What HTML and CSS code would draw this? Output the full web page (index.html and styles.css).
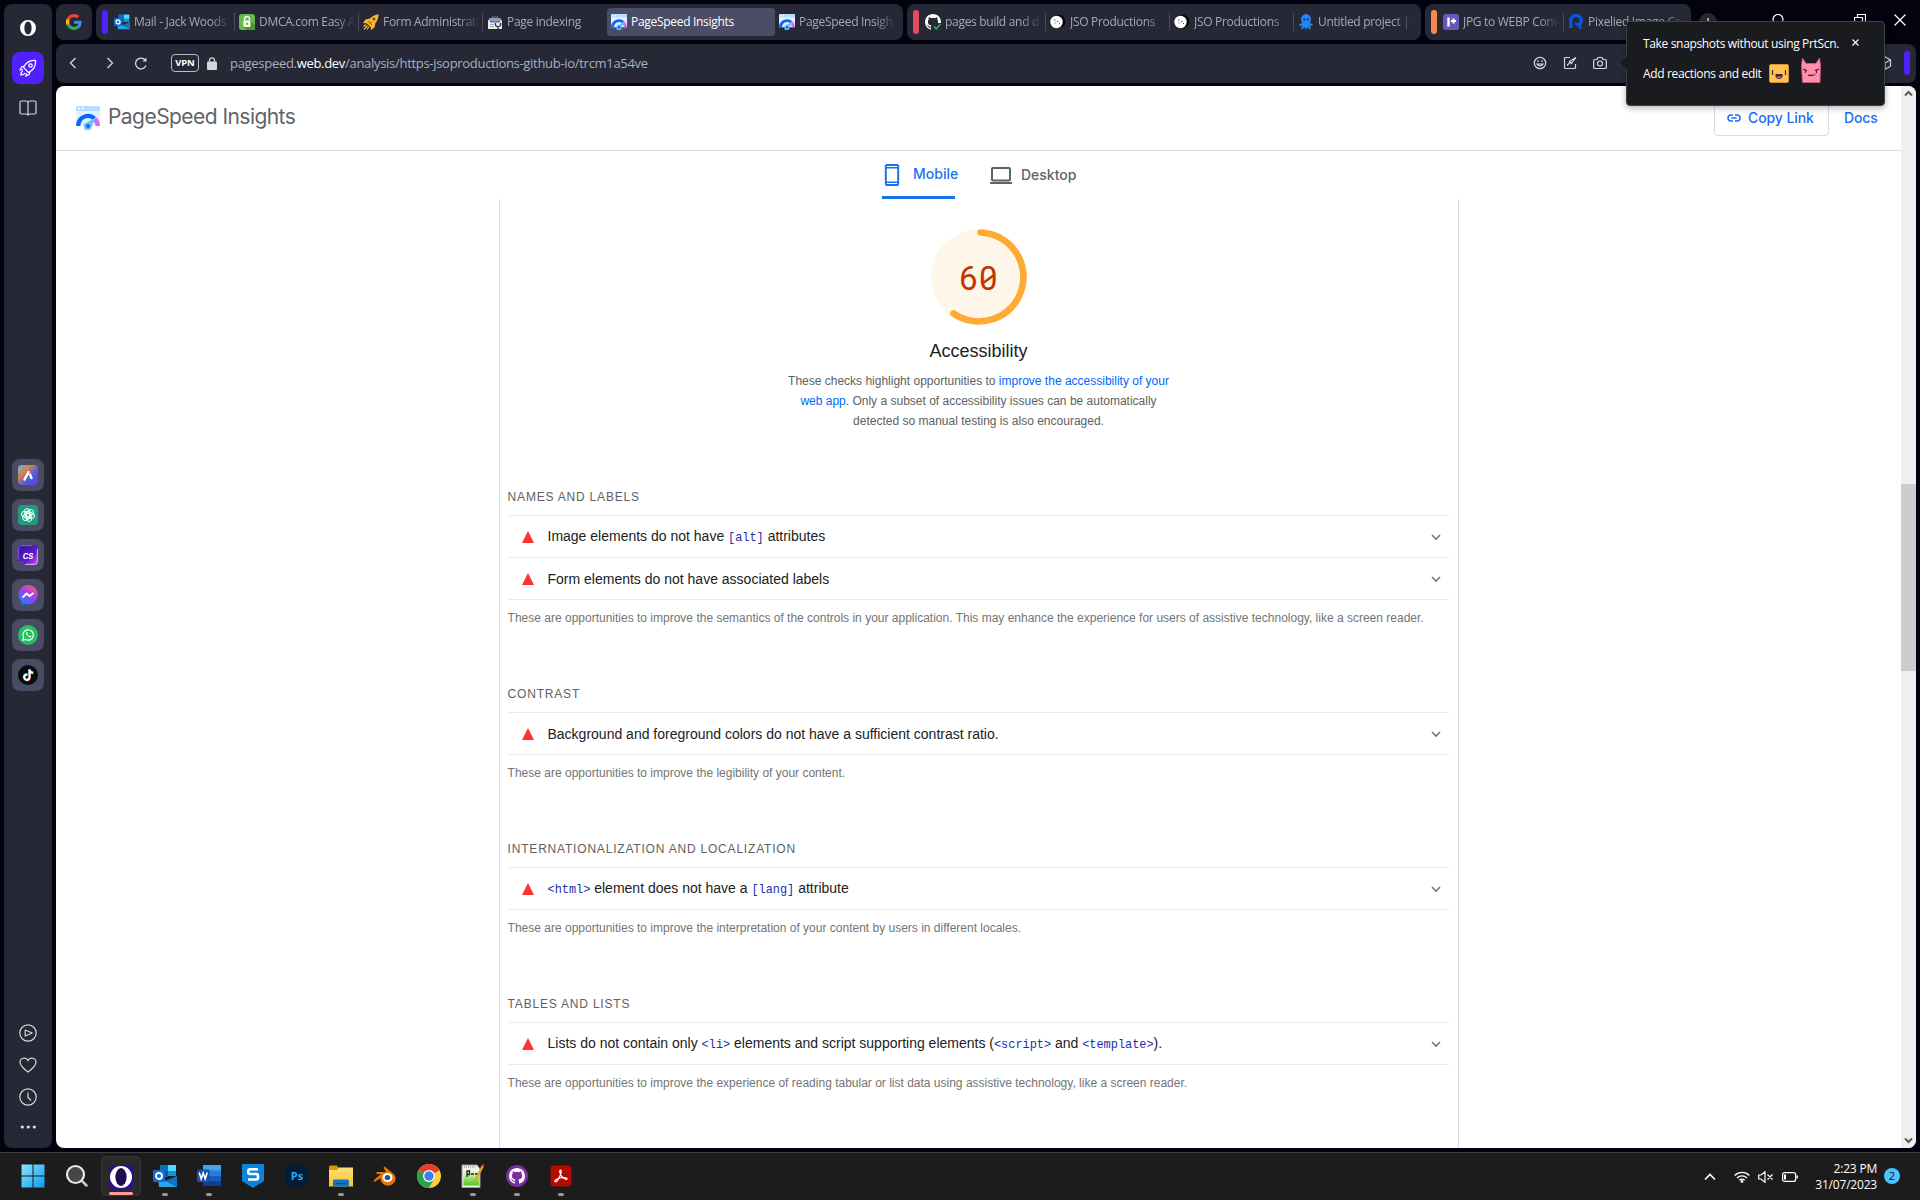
FILE: index.html
```html
<!DOCTYPE html>
<html lang="en">
<head>
<meta charset="utf-8">
<title>PageSpeed Insights</title>
<link rel="stylesheet" href="styles.css">
</head>
<body>
<svg class="defs" aria-hidden="true">
  <defs>
    <linearGradient id="gWin" x1="0" y1="0" x2="1" y2="1"><stop offset="0" stop-color="#8be3ff"/><stop offset="1" stop-color="#0c9bf2"/></linearGradient>
    <linearGradient id="gAria" x1="0" y1="0" x2="1" y2="1"><stop offset="0" stop-color="#5fc4d8"/><stop offset=".35" stop-color="#d97b4c"/><stop offset=".6" stop-color="#4a63d8"/><stop offset="1" stop-color="#6a35e0"/></linearGradient>
    <linearGradient id="gCs" x1="0" y1="0" x2="1" y2="1"><stop offset="0" stop-color="#2e1590"/><stop offset=".6" stop-color="#5a1bd0"/><stop offset="1" stop-color="#d05af0"/></linearGradient>
    <linearGradient id="gMsg" x1=".8" y1="0" x2=".2" y2="1"><stop offset="0" stop-color="#ff5f78"/><stop offset=".45" stop-color="#a03cf5"/><stop offset="1" stop-color="#0a84ff"/></linearGradient>
    <linearGradient id="gNpp" x1="0" y1="0" x2="0" y2="1"><stop offset="0" stop-color="#f6ffe8"/><stop offset="1" stop-color="#4fc41c"/></linearGradient>
    <linearGradient id="gFold" x1="0" y1="0" x2="0" y2="1"><stop offset="0" stop-color="#ffe07a"/><stop offset="1" stop-color="#f8bf2c"/></linearGradient>
    <symbol id="psi" viewBox="0 0 24 24">
      <path d="M0 2a2 2 0 0 1 2-2h20a2 2 0 0 1 2 2v18H0z" fill="#e3f1ff"/>
      <path d="M0 2a2 2 0 0 1 2-2h20a2 2 0 0 1 2 2v3H0z" fill="#b8dcff"/>
      <circle cx="3" cy="2.5" r="1" fill="#fff"/><circle cx="7" cy="2.5" r="1" fill="#fff"/>
      <path d="M0 20A12 12 0 0 1 20 11l-3 3A7.5 7.5 0 0 0 4.500 20z" fill="#0a66ff"/>
      <path d="M20 11a12 12 0 0 1 4 9h-4.500a7 7 0 0 0-2-4.500z" fill="#cf6ef5"/>
      <path d="M19.500 11.500 15.800 20a4 4 0 1 1-5-3.500z" fill="#67c4ff"/>
      <circle cx="12" cy="20" r="2" fill="#0a66ff"/>
    </symbol>
    <symbol id="jso" viewBox="0 0 16 16"><circle cx="8.500" cy="7.500" r="6.800" fill="#050505"/><circle cx="6.500" cy="8" r="6.200" fill="#fff"/><path d="M4 6h1.500M7 7.500h1.500M4.500 9h1M9 9.500h1" stroke="#444" stroke-width=".9"/></symbol>
    <symbol id="outlook" viewBox="0 0 24 24">
      <path d="M7 1h16v11H7z" fill="#1490df"/><path d="M15 1h8v6h-8z" fill="#50d9ff"/><path d="M7 1h8v6H7z" fill="#0f6cbd"/><path d="M7 7h8v6H7z" fill="#0a5aa8"/>
      <path d="M5 12l10 6 9-6v11H6z" fill="#28a8ea"/><path d="M24 12v11L12 17z" fill="#1272c4"/>
      <rect x="0" y="6" width="12" height="12" rx="1" fill="#0f6cd0"/><circle cx="6" cy="12" r="3" fill="none" stroke="#fff" stroke-width="1.900"/>
    </symbol>
    <symbol id="octo" viewBox="0 0 16 16"><path d="M8 0C3.580 0 0 3.580 0 8c0 3.540 2.290 6.530 5.470 7.590.4.070.55-.17.55-.38 0-.19-.010-.82-.010-1.490-2.010.37-2.530-.49-2.690-.94-.09-.23-.48-.94-.82-1.130-.28-.15-.68-.52-.010-.53.63-.010 1.080.58 1.230.82.72 1.210 1.870.87 2.330.66.070-.52.28-.87.51-1.070-1.780-.2-3.640-.89-3.640-3.950 0-.87.31-1.590.82-2.150-.08-.2-.36-1.020.08-2.120 0 0 .67-.21 2.200.82a7.600 7.600 0 0 1 4 0c1.530-1.040 2.200-.82 2.200-.82.44 1.100.16 1.920.08 2.120.51.56.82 1.270.82 2.150 0 3.070-1.870 3.750-3.650 3.950.29.25.54.73.54 1.480 0 1.070-.010 1.930-.010 2.200 0 .21.15.46.55.38A8 8 0 0 0 16 8c0-4.420-3.580-8-8-8z"/></symbol>
    <symbol id="chev" viewBox="0 0 12 12"><path d="M2 4l4 4 4-4" fill="none" stroke="currentColor" stroke-width="1.600"/></symbol>
  </defs>
</svg>

<div class="desktop">
  <div class="browser">
    <aside class="sidebar">
      <div class="side-top">
        <svg class="opera" viewBox="0 0 16 16"><path fill="#fff" fill-rule="evenodd" d="M8 0a8 8 0 1 0 0 16A8 8 0 0 0 8 0zm0 1.500c2.200 0 3.600 2.900 3.600 6.500S10.200 14.500 8 14.500 4.400 11.600 4.400 8 5.800 1.500 8 1.500z"/></svg>
        <div class="tile tile-on"><svg width="18" height="18" viewBox="0 0 18 18" class="ln"><path d="M16.500 1.500C11 1 7 3.500 4.500 8.500l5 5C14.500 11 17 7 16.500 1.500zM5.500 7L2.500 8 1 11l3-.5M11 12.500L10 15.500 7 17l.5-3"/><circle cx="11.500" cy="6.500" r="1.700"/><path d="M4 12c-2 .5-2 2-2.200 4 2-.2 3.500-.2 4-2.200"/></svg></div>
        <svg class="book ln" width="18" height="17" viewBox="0 0 18 17"><path d="M9 3C9 1.500 8 1 7 1H2.500Q1 1 1 2.500v10Q1 14 2.500 14H7q2 0 2 1.500Q9 14 11 14h4.500q1.500 0 1.500-1.500v-10Q17 1 15.500 1H11Q9 1 9 3zv12.500"/></svg>
      </div>
      <div class="side-apps">
        <div class="tile"><svg viewBox="0 0 20 20"><rect width="20" height="20" rx="4" fill="url(#gAria)"/><path d="M6.500 14.500L10.500 7M12 9.500l1.500 3.500" stroke="#fff" stroke-width="2.400" stroke-linecap="round"/></svg></div>
        <div class="tile"><svg viewBox="0 0 20 20"><rect width="20" height="20" rx="4" fill="#1f9c7e"/><g fill="none" stroke="#e9fff8" stroke-width="1"><rect x="6.300" y="3.600" width="5.400" height="8.600" rx="2.700"/><rect x="6.300" y="3.600" width="5.400" height="8.600" rx="2.700" transform="rotate(60 10 10)"/><rect x="6.300" y="3.600" width="5.400" height="8.600" rx="2.700" transform="rotate(120 10 10)"/><rect x="6.300" y="3.600" width="5.400" height="8.600" rx="2.700" transform="rotate(180 10 10)"/><rect x="6.300" y="3.600" width="5.400" height="8.600" rx="2.700" transform="rotate(240 10 10)"/><rect x="6.300" y="3.600" width="5.400" height="8.600" rx="2.700" transform="rotate(300 10 10)"/></g></svg></div>
        <div class="tile"><svg viewBox="0 0 20 20"><path d="M4 0h12q4 0 4 4v12q0 4-4 4H6v-4H0V4q0-4 4-4z" fill="url(#gCs)"/><path d="M7 19.400h9q3.400 0 3.400-3.400V4" fill="none" stroke="#e9a6ff" stroke-width="1"/><path d="M.6 14.500V4Q.6.6 4 .6h10" fill="none" stroke="#9368f0" stroke-width=".8"/><text x="10" y="13.500" class="cs-t">CS</text></svg></div>
        <div class="tile"><svg viewBox="0 0 20 20"><path d="M10 0a9.700 9.700 0 0 1 0 19.400Q8.500 19.400 7 19l-3.500 1-.2-3.500A9.700 9.700 0 0 1 10 0z" fill="url(#gMsg)"/><path d="M4.500 12.500L8.500 8.500l3 2.500 4-3" fill="none" stroke="#fff" stroke-width="2"/></svg></div>
        <div class="tile"><svg viewBox="0 0 20 20"><circle cx="10" cy="10" r="10" fill="#25c15c"/><path d="M4.800 15.200l.8-2.700a5.200 5.200 0 1 1 2 2z" fill="none" stroke="#fff" stroke-width="1.200"/><path d="M8 7.500q0 4 4.500 5l.8-1.200-1.500-.8-.8.700q-1.200-.5-1.700-1.700l.6-.8-.7-1.500z" fill="#fff"/></svg></div>
        <div class="tile"><svg viewBox="0 0 20 20"><circle cx="10" cy="10" r="10" fill="#0b0b0d"/><g fill="none" stroke-width="1.900"><path d="M9 9.300a2.700 2.700 0 1 0 2.200 2.700V4.300q.5 3 3.600 3.200" stroke="#25f4ee"/><path d="M9.900 9.900a2.700 2.700 0 1 0 2.200 2.700V5q.5 3 3.400 3.200" stroke="#fe2c55"/><path d="M9.400 9.600a2.700 2.700 0 1 0 2.200 2.700V4.600q.5 3 3.500 3.200" stroke="#fff"/></g></svg></div>
      </div>
      <div class="side-bot ln">
        <svg width="18" height="18" viewBox="0 0 18 18"><circle cx="9" cy="9" r="8.200"/><path d="M6.200 6v6l7-3z" stroke-linejoin="round"/></svg>
        <svg width="18" height="16" viewBox="0 0 18 16"><path d="M9 15Q1 9 1 5.200A4.200 4.200 0 0 1 9 3.600 4.200 4.200 0 0 1 17 5.200Q17 9 9 15z"/></svg>
        <svg width="18" height="18" viewBox="0 0 18 18"><circle cx="9" cy="9" r="8.200"/><path d="M9 4.500V9.500l3 3"/></svg>
        <svg class="dots" width="18" height="4" viewBox="0 0 18 4"><g fill="#dfe0e8" stroke="none"><circle cx="3.300" cy="2" r="1.600"/><circle cx="9.300" cy="2" r="1.600"/><circle cx="15.300" cy="2" r="1.600"/></g></svg>
      </div>
    </aside>

    <div class="main">
      <div class="tabstrip">
        <div class="pinned"><svg width="16" height="16" viewBox="0 0 48 48"><path fill="#EA4335" d="M24 9.500c3.540 0 6.710 1.220 9.210 3.600l6.850-6.850C35.900 2.380 30.470 0 24 0 14.620 0 6.510 5.380 2.560 13.220l7.980 6.190C12.430 13.720 17.740 9.500 24 9.500z"/><path fill="#4285F4" d="M46.980 24.550c0-1.570-.15-3.090-.38-4.550H24v9.020h12.940c-.58 2.960-2.260 5.480-4.780 7.180l7.730 6c4.510-4.180 7.090-10.360 7.090-17.650z"/><path fill="#FBBC05" d="M10.530 28.590a14.500 14.500 0 0 1 0-9.180l-7.980-6.190a24 24 0 0 0 0 21.560z"/><path fill="#34A853" d="M24 48c6.480 0 11.930-2.130 15.890-5.810l-7.730-6c-2.150 1.450-4.920 2.300-8.160 2.300-6.260 0-11.570-4.220-13.470-9.910l-7.980 6.190C6.510 42.620 14.620 48 24 48z"/></svg></div>
        <div class="group">
          <i class="bar violet"></i>
          <div class="tab first"><svg width="16" height="16"><use href="#outlook"/></svg><span>Mail - Jack Woods</span></div>
          <div class="tab"><svg width="16" height="16" viewBox="0 0 16 16"><rect width="16" height="16" rx="3" fill="#69b84a"/><path d="M11 6l5 5v5H8l-4-3z" fill="#4d9433"/><path d="M5.500 6.500V5a2.500 2.500 0 0 1 5 0v1.500" fill="none" stroke="#fff" stroke-width="1.300"/><rect x="4.500" y="6.500" width="7" height="6.500" rx="1" fill="#fff"/><circle cx="8" cy="9.700" r="1.200" fill="#69b84a"/></svg><span>DMCA.com Easy A</span></div>
          <div class="tab"><svg width="16" height="16" viewBox="0 0 16 16"><path d="M15.500.3Q10 1 7 4.500L2.500 5.500 0 9l4 .5 3.500 3.500.5 3 3.500-2.500 1-4.500Q15.500 6 15.500.3z" fill="#fbb52c"/><path d="M1 15.500l3.500-4M4 15.500l2-3M.5 12.500L3 10.500" stroke="#fbb52c" stroke-width="1.200"/><circle cx="11" cy="5" r="1.400" fill="#6b4a12"/><path d="M5 7l4 4M7 9.500l2-2" stroke="#6b4a12" stroke-width=".8"/></svg><span>Form Administrati</span></div>
          <div class="tab"><svg width="16" height="16" viewBox="0 0 16 16"><path d="M5.500 4.500V3h5v1.500" fill="none" stroke="#777" stroke-width="1.200"/><path d="M2.500 4.500h11L15 7v8H1V7z" fill="#e8eaed"/><path d="M2.500 4.500h11l1 2h-13z" fill="#9aa0a6"/><path d="M3 6.500h10v2H3z" fill="#3c78e0"/><path d="M3 10.500h4M3 12.500h4" stroke="#aaa"/><path d="M8.500 9v2.500l2.500 1.500 2.500-1.500V9M11 12.500V16" stroke="#333" stroke-width="1.300" fill="none"/></svg><span>Page indexing</span></div>
          <div class="tab active"><svg width="16" height="16"><use href="#psi"/></svg><span>PageSpeed Insights</span></div>
          <div class="tab first"><svg width="16" height="16"><use href="#psi"/></svg><span>PageSpeed Insigh</span></div>
        </div>
        <div class="group">
          <i class="bar red"></i>
          <div class="tab first"><svg width="16" height="16" viewBox="0 0 16 16"><use href="#octo" fill="#fff"/><path d="M7.500 9h9v7.500h-9z" fill="#262836"/><path d="M9 12.500l2.300 2.300L15.500 10" fill="none" stroke="#2fb54e" stroke-width="1.500"/></svg><span>pages build and d</span></div>
          <div class="tab"><svg width="16" height="16"><use href="#jso"/></svg><span>JSO Productions</span></div>
          <div class="tab"><svg width="16" height="16"><use href="#jso"/></svg><span>JSO Productions</span></div>
          <div class="tab"><svg width="16" height="16" viewBox="0 0 16 16"><path d="M8 0a5 5 0 0 1 5 5.500Q13 8 11.500 9l3 1v2l-3-.5 1.500 2.500-1.500 1.500L9.500 13 8 16l-1.500-3-2 2.500L3 14l1.500-2.500-3 .5v-2l3-1Q3 8 3 5.500A5 5 0 0 1 8 0z" fill="#2483f5"/><path d="M5.500 5.500h2M9 5.500h2" stroke="#11315f" stroke-width="1.300"/></svg><span>Untitled project | C</span></div>
        </div>
        <div class="group">
          <i class="bar orange"></i>
          <div class="tab first"><svg width="16" height="16" viewBox="0 0 16 16"><rect width="16" height="16" rx="2.500" fill="#6558b8"/><path d="M5.500 3.500v9" stroke="#fff" stroke-width="2.400"/><path d="M10.500 4.500v5M8 7h5" stroke="#fff" stroke-width="2"/></svg><span>JPG to WEBP Conv</span></div>
          <div class="tab"><svg width="16" height="16" viewBox="0 0 16 16"><path d="M2.800 14V6.500a5.200 5.200 0 1 1 7.500 4.700" fill="none" stroke="#0a55e0" stroke-width="3.600"/><circle cx="8" cy="6.500" r="2" fill="#262836"/><path d="M7 9.500q4 .5 6 5.500" stroke="#0a55e0" stroke-width="2.600" fill="none"/></svg><span>Pixelied Image Co</span></div>
        </div>
        <div class="newtab">+</div>
        <div class="wincontrols">
          <svg width="14" height="14" viewBox="0 0 14 14"><circle cx="7" cy="5.500" r="5"/><path d="M10.500 9l3 4"/></svg>
          <svg width="12" height="12" viewBox="0 0 12 12"><path d="M.5 3.500h8v8h-8zM3.500 3.500v-3h8v8h-3"/></svg>
          <svg width="12" height="12" viewBox="0 0 12 12"><path d="M.5.500l11 11M11.500.5l-11 11"/></svg>
        </div>
      </div>

      <div class="addressbar">
        <svg class="nav" width="8" height="12" viewBox="0 0 8 12"><path d="M6.500 1L1.500 6l5 5"/></svg>
        <svg class="nav fwd" width="8" height="12" viewBox="0 0 8 12"><path d="M1.500 1l5 5-5 5"/></svg>
        <svg class="nav rel" width="14" height="13" viewBox="0 0 14 13"><path d="M12 8.500A5.400 5.400 0 1 1 11 2.800"/><path d="M12.500.5v4h-4z" fill="#d6d7de" stroke="none"/></svg>
        <span class="vpn">VPN</span>
        <svg class="lock" width="10" height="13" viewBox="0 0 10 13"><rect y="4.500" width="10" height="8.500" rx="1" fill="#d2d5da"/><path d="M2.500 5V3.300a2.500 2.500 0 0 1 5 0V5" fill="none" stroke="#d2d5da" stroke-width="1.300"/></svg>
        <span class="url">pagespeed.<b>web.dev</b>/analysis/https-jsoproductions-github-io/trcm1a54ve</span>
        <div class="addr-icons ln">
          <svg width="14" height="14" viewBox="0 0 14 14"><circle cx="7" cy="7" r="5.700"/><path d="M4 8q3 3.600 6 0z"/><path d="M5 4.300v1.800M9 4.300v1.800"/></svg>
          <svg width="14" height="14" viewBox="0 0 14 14"><path d="M7 1.500H2.500q-1 0-1 1v9q0 1 1 1h9q1 0 1-1V8"/><path d="M4 9.500L7 6.500M13 1.500L8 4.500l-1.500 1 2 2L9.500 6z"/></svg>
          <svg width="14" height="14" viewBox="0 0 14 14"><path d="M1.700 3.500H4l1-2h4l1 2h2.300q1 0 1 1v7q0 1-1 1H1.700q-1 0-1-1v-7q0-1 1-1z"/><circle cx="7" cy="7.500" r="2.500"/></svg>
        </div>
        <svg class="cube ln" width="14" height="14" viewBox="0 0 14 14"><path d="M7 .800l5.500 3v6.400l-5.500 3-5.500-3V3.800zM1.500 3.800L7 7l5.500-3.200M7 7v6"/></svg>
        <i class="bar violet"></i>
      </div>

      <div class="page">
        <div class="doc">
          <header class="top">
            <svg width="24" height="24"><use href="#psi"/></svg>
            <h1>PageSpeed Insights</h1>
            <div class="copy"><svg width="14" height="8" viewBox="0 0 14 8"><path d="M6 1H4a3 3 0 0 0 0 6h2M8 1h2a3 3 0 0 1 0 6H8M4.300 4h5.400" fill="none" stroke="#1a6cf5" stroke-width="1.500"/></svg><span>Copy Link</span></div>
            <span class="docs">Docs</span>
          </header>
          <nav class="views">
            <div class="view on"><svg width="16" height="22" viewBox="0 0 16 22"><rect x="1.800" y="1" width="12.400" height="20" rx="1.300" fill="none" stroke="#1a73e8" stroke-width="2"/><path d="M2 3.700h12M2 18.300h12" stroke="#1a73e8" stroke-width="1.400"/></svg><span>Mobile</span></div>
            <div class="view desk"><svg width="22" height="17" viewBox="0 0 22 17"><rect x="2" y="1" width="18" height="12.500" rx="1" fill="none" stroke="#5f6368" stroke-width="2"/><path d="M0 16h22" stroke="#5f6368" stroke-width="1.900"/></svg><span>Desktop</span></div>
          </nav>
          <main class="report">
            <svg class="gauge" width="96" height="96" viewBox="0 0 96 96"><circle cx="48" cy="48" r="48" fill="#fff6ea"/><path d="M49.500 3.500A44.500 44.500 0 1 1 22.500 84.500" fill="none" stroke="#fa3" stroke-width="6.600" stroke-linecap="round"/><text x="28" y="60.500" class="score">6</text><text x="48" y="60.500" class="score">0</text><path d="M51.500 54.500l11.500-8.500" stroke="#c33300" stroke-width="2.300"/></svg>
            <h2>Accessibility</h2>
            <p class="intro">These checks highlight opportunities to <a>improve the accessibility of your<br>web app</a>. Only a subset of accessibility issues can be automatically<br>detected so manual testing is also encouraged.</p>
            <section>
              <h3>Names and labels</h3>
              <div class="audit"><i></i><span>Image elements do not have <code>[alt]</code> attributes</span><svg width="12" height="12"><use href="#chev"/></svg></div>
              <div class="audit"><i></i><span>Form elements do not have associated labels</span><svg width="12" height="12"><use href="#chev"/></svg></div>
              <p>These are opportunities to improve the semantics of the controls in your application. This may enhance the experience for users of assistive technology, like a screen reader.</p>
            </section>
            <section>
              <h3>Contrast</h3>
              <div class="audit"><i></i><span>Background and foreground colors do not have a sufficient contrast ratio.</span><svg width="12" height="12"><use href="#chev"/></svg></div>
              <p>These are opportunities to improve the legibility of your content.</p>
            </section>
            <section>
              <h3>Internationalization and localization</h3>
              <div class="audit"><i></i><span><code>&lt;html&gt;</code> element does not have a <code>[lang]</code> attribute</span><svg width="12" height="12"><use href="#chev"/></svg></div>
              <p>These are opportunities to improve the interpretation of your content by users in different locales.</p>
            </section>
            <section>
              <h3>Tables and lists</h3>
              <div class="audit"><i></i><span>Lists do not contain only <code>&lt;li&gt;</code> elements and script supporting elements (<code>&lt;script&gt;</code> and <code>&lt;template&gt;</code>).</span><svg width="12" height="12"><use href="#chev"/></svg></div>
              <p>These are opportunities to improve the experience of reading tabular or list data using assistive technology, like a screen reader.</p>
            </section>
          </main>
        </div>
        <div class="scroll">
          <svg class="up" width="9" height="7" viewBox="0 0 9 7"><path d="M1 5.500l3.500-3.500L8 5.500" fill="none" stroke="#5a5a5a" stroke-width="2"/></svg>
          <i class="thumb"></i>
          <svg class="down" width="9" height="7" viewBox="0 0 9 7"><path d="M1 1.500L4.500 5 8 1.500" fill="none" stroke="#5a5a5a" stroke-width="2"/></svg>
        </div>
      </div>
    </div>
  </div>

  <footer class="taskbar">
    <div class="apps">
      <div class="app"><svg width="24" height="24" viewBox="0 0 24 24"><path d="M.5.500h11v11H.5zM12.500.5h11v11h-11zM.5 12.500h11v11H.5zM12.500 12.500h11v11h-11z" fill="url(#gWin)"/></svg></div>
      <div class="app"><svg width="24" height="24" viewBox="0 0 24 24"><path d="M16 16l5.500 5.500" stroke="#c9c9c9" stroke-width="2.600" stroke-linecap="round"/><circle cx="10.500" cy="10.500" r="8.500" fill="#474747" stroke="#e9e9e9" stroke-width="2.200"/></svg></div>
      <div class="app focus"><svg width="24" height="24" viewBox="0 0 24 24"><rect width="24" height="24" rx="4" fill="#2a0f8a"/><circle cx="12" cy="12" r="11" fill="#fff"/><ellipse cx="12" cy="12" rx="5.600" ry="9" fill="#210b50"/></svg><b></b></div>
      <div class="app run"><svg width="24" height="24"><use href="#outlook"/></svg><b></b></div>
      <div class="app run"><svg width="24" height="24" viewBox="0 0 24 24"><path d="M6 1h18v6H6z" fill="#41a5ee"/><path d="M6 6.500h18V12H6z" fill="#2b7cd3"/><path d="M6 12h18v5.500H6z" fill="#185abd"/><path d="M6 17h18v5H6z" fill="#103f91"/><rect y="5.500" width="12.500" height="12.500" rx="1" fill="#1450a8"/><path d="M2.200 8.500L4.200 15l2-6 2 6 2-6.500" fill="none" stroke="#fff" stroke-width="1.600"/></svg><b></b></div>
      <div class="app"><svg width="24" height="24" viewBox="0 0 24 24"><path d="M1 0h22v17l-11 7L1 17z" fill="#0a84d8"/><path d="M17 5.300H9Q7.300 5.300 7.300 7v1.500Q7.300 10 9 10h6q2 0 2 2v1.500q0 2-2 2H7" fill="none" stroke="#fff" stroke-width="2.600"/></svg></div>
      <div class="app"><svg width="24" height="24" viewBox="0 0 24 24"><rect x="1" y="1.500" width="22" height="21" rx="4" fill="#001e36"/><text x="12" y="16" class="ps-t">Ps</text></svg></div>
      <div class="app run"><svg width="24" height="24" viewBox="0 0 24 24"><path d="M0 3q0-1.500 1.500-1.500h6L10 4v4H0z" fill="#d99a00"/><path d="M0 6h8l2-2.500h14v19H0z" fill="url(#gFold)"/><path d="M4 22.500V17q0-1.500 1.500-1.500h13Q20 15.500 20 17v5.500z" fill="#0a78c8"/><path d="M7 19.500h10" stroke="#0b4f8c" stroke-width="1.200"/></svg><b></b></div>
      <div class="app"><svg width="24" height="24" viewBox="0 0 24 24"><path d="M10.500 3.500l1-1 8 6.500a7.500 7 0 1 1-12 5l-6 4-1-1.500 7.500-6.500H3.500V8h9.500z" fill="#ea7600"/><ellipse cx="14.500" cy="13.500" rx="5" ry="4.500" fill="#fff"/><ellipse cx="14.500" cy="13.500" rx="2.800" ry="2.600" fill="#265787"/></svg></div>
      <div class="app"><svg width="24" height="24" viewBox="0 0 24 24"><circle cx="12" cy="12" r="12" fill="#ffcd40"/><path d="M12 12L1.600 6A12 12 0 0 1 22.400 6z" fill="#e53e30"/><path d="M22.400 6H12v6z" fill="#e53e30"/><path d="M1.600 6A12 12 0 0 0 11.800 24L17.200 15 12 12z" fill="#2ba24c"/><circle cx="12" cy="12" r="6" fill="#fff"/><circle cx="12" cy="12" r="4.700" fill="#3a7df0"/></svg></div>
      <div class="app run"><svg width="24" height="24" viewBox="0 0 24 24"><path d="M1 1h15l3 4v18.500H1z" fill="#f2f2f2" stroke="#9a9a9a"/><path d="M2.500 6h15.500v15.500h-15.500z" fill="url(#gNpp)"/><path d="M3 3h11" stroke="#777" stroke-dasharray="1 1"/><path d="M6 13V7h2.500v3.500H6M10 10h3M14 10h3" stroke="#222" stroke-width="1.300" fill="none"/><path d="M22 1.500L13.500 18" stroke="#e5a52c" stroke-width="2.400"/><path d="M22.500 0l-1 2.500" stroke="#b33" stroke-width="2.400"/></svg><b></b></div>
      <div class="app run"><svg width="24" height="24" viewBox="0 0 24 24"><circle cx="12" cy="12" r="11" fill="#7a2fa0"/><svg x="4" y="4" width="16" height="16"><use href="#octo" fill="#fff"/></svg></svg><b></b></div>
      <div class="app run"><svg width="24" height="24" viewBox="0 0 24 24"><rect x="1.500" y="1.500" width="21" height="21" rx="4" fill="#b30b00"/><path d="M6 17.500q-.8-1 1.500-2.200Q11 13.300 15 13.500q3.500.2 3 1.500-1 1.200-4-1.200-2.500-2.300-3.200-5.500-.3-2.300.8-2.300 1.200.3.200 3.500Q10.500 14 8 17q-1.200 1.200-2 .5z" fill="none" stroke="#fff" stroke-width="1.200"/></svg><b></b></div>
    </div>
    <div class="tray">
      <svg width="12" height="8" viewBox="0 0 12 8"><path d="M1 6.500l5-5 5 5" fill="none" stroke="#fff" stroke-width="1.600"/></svg>
      <svg class="wifi" width="16" height="12" viewBox="0 0 16 12"><g fill="none" stroke="#fff" stroke-width="1.300"><path d="M.7 4.500a10.300 10.300 0 0 1 14.600 0M3 7a7 7 0 0 1 10 0M5.300 9.200a3.800 3.800 0 0 1 5.400 0"/></g><circle cx="8" cy="10.500" r="1.400" fill="#fff"/></svg>
      <svg class="mute" width="16" height="12" viewBox="0 0 16 12"><path d="M.7 4H3L7 .800v10.400L3 8H.7zM9.500 3.500l5 5M14.500 3.500l-5 5" fill="none" stroke="#fff" stroke-width="1.200"/></svg>
      <svg class="batt" width="16" height="10" viewBox="0 0 16 10"><rect x=".6" y=".6" width="13" height="8.800" rx="2" fill="none" stroke="#fff" stroke-width="1.200"/><path d="M3 2.500v5" stroke="#fff" stroke-width="2"/><path d="M15.200 3.500v3" stroke="#fff" stroke-width="1.400"/></svg>
      <div class="clock"><span>2:23 PM</span><span>31/07/2023</span></div>
      <span class="badge">2</span>
    </div>
  </footer>

  <div class="tip">
    <svg class="tip-arrow" width="10" height="16" viewBox="0 0 10 16"><path d="M10 1L1 8l9 7z" fill="#191b1f"/><path d="M9.500 1L1 8l8.500 7" fill="none" stroke="#33393f"/></svg>
    <div class="tip-row"><span class="l1">Take snapshots without using PrtScn.</span><svg width="7" height="7" viewBox="0 0 7 7"><path d="M.5.500l6 6M6.500.5l-6 6" stroke="#fff" stroke-width="1.100"/></svg></div>
    <div class="tip-row two"><span class="l2">Add reactions and edit</span>
      <svg width="20" height="19" viewBox="0 0 20 19"><rect x=".5" y=".5" width="19" height="18" rx="1.500" fill="#fcc550" stroke="#d98f3c"/><path d="M3.500 6v5M16.500 6v5" stroke="#3d2a3a" stroke-width="1.200"/><path d="M6.500 10h7v2.500q-1 2.500-3.500 2.500t-3.500-2.500z" fill="#4a2038"/><path d="M8 12.500h4v1.500H8z" fill="#f05868"/></svg>
      <svg width="20" height="26" viewBox="0 0 20 26"><path d="M1.500 25.500L.5 8.500 1.500 1 5 6.500h10L18.500 1l1 7.500-.5 17z" fill="#ff8fab" stroke="#d85a80" stroke-width=".8"/><path d="M2 12l4 1.500M18 12l-4 1.500M4.500 13v3M15.500 13v3M7 17.500q1.500 2 3 .5 2 1.500 4-1" fill="none" stroke="#4a1838" stroke-width="1.200"/></svg>
    </div>
  </div>
</div>
</body>
</html>
```
FILE: styles.css
```css
* { box-sizing: border-box; }
body { margin: 0; overflow: hidden; font-family: "Liberation Sans", Arial, sans-serif; }
svg { display: block; flex: none; }
.defs { position: absolute; width: 0; height: 0; }
i, b { font-style: normal; }
h1, h2, h3, p { margin: 0; font-weight: 400; }

.desktop { position: relative; width: 1920px; height: 1200px; display: flex; flex-direction: column; background: #02030f; }
.browser { display: flex; gap: 4px; height: 1152px; padding: 4px; }
.ln { fill: none; stroke: #d6d7de; stroke-width: 1.2; }

/* sidebar */
.sidebar { width: 48px; height: 1144px; border-radius: 8px; background: #262836; display: flex; flex-direction: column; padding: 16px 8px 19px; }
.side-top { display: flex; flex-direction: column; align-items: center; height: 439px; }
.opera { width: 16px; height: 16px; }
.tile { width: 32px; height: 32px; border-radius: 8px; background: #4a4c63; display: flex; align-items: center; justify-content: center; }
.tile svg { width: 20px; height: 20px; }
.tile-on { background: #5120ff; margin: 16px 0; }
.tile-on svg { width: 18px; height: 18px; stroke: #fff; }
.side-apps { display: flex; flex-direction: column; gap: 8px; }
.side-bot { margin-top: auto; display: flex; flex-direction: column; align-items: center; gap: 15px; padding-right: 1px; }
.dots { margin-top: 4px; }
.cs-t { font: italic 700 7.5px Inter, sans-serif; fill: #fff; stroke: none; text-anchor: middle; }
.ps-t { font: 700 11px "Open Sans", sans-serif; fill: #31a8ff; text-anchor: middle; }

/* tabs */
.main { width: 1860px; display: flex; flex-direction: column; }
.tabstrip { display: flex; gap: 4px; height: 36px; margin-bottom: 4px; font: 12px/16px "Open Sans", "Noto Sans", sans-serif; letter-spacing: -.3px; color: #a7a8b1; }
.pinned { width: 36px; border-radius: 8px; background: #262836; display: grid; place-items: center; }
.group { display: flex; align-items: center; background: #262836; border-radius: 8px; padding: 0 4px 0 6px; }
.bar { width: 6px; height: 24px; border-radius: 3px; margin-right: 2px; }
.violet { background: #5120ff; }
.red { background: #e54a60; }
.orange { background: #f28b4c; }
.tab { width: 124px; height: 18px; border-left: 1px solid #484a60; padding-left: 4px; display: flex; align-items: center; gap: 4px; }
.tab.first { border-left-color: transparent; padding-left: 3px; }
.tab span { width: 97px; overflow: hidden; white-space: nowrap; -webkit-mask-image: linear-gradient(90deg, #000 76px, transparent 97px); mask-image: linear-gradient(90deg, #000 76px, transparent 97px); }
.tab.active { width: 168px; height: 28px; margin-left: 1px; border: 0; border-radius: 4px; background: #4b4d66; color: #fff; }
.tab.active span { width: 140px; -webkit-mask-image: none; mask-image: none; }
.newtab { width: 18px; height: 18px; border-radius: 9px; background: #262836; color: #fff; margin: 9px 0 0 4px; text-align: center; font-size: 15px; line-height: 17px; }
.wincontrols { display: flex; margin: 10px 10px 0 auto; fill: none; stroke: #fff; stroke-width: 1.2; }
.wincontrols svg:nth-child(1) { margin-left: -2px; }
.wincontrols svg:nth-child(2) { margin: 0 28px 0 69px; }

/* address bar */
.addressbar { height: 39px; margin-bottom: 3px; border-radius: 8px; background: #262836; display: flex; align-items: center; padding: 0 6px 1px 13px; }
.nav { fill: none; stroke: #d6d7de; stroke-width: 1.3; }
.fwd { margin-left: 29px; }
.rel { margin-left: 20px; }
.vpn { width: 28px; height: 18px; margin-left: 23px; border: 1.5px solid #b9bbc4; border-radius: 4px; color: #fff; font: 700 9.5px/15px "Open Sans", sans-serif; letter-spacing: -.2px; text-align: center; }
.lock { margin: 0 13px 0 8px; }
.url { font: 13px/18px "Open Sans", "Noto Sans", sans-serif; letter-spacing: -.3px; color: #a9b0bf; white-space: nowrap; }
.url b { font-weight: 400; color: #fff; }
.addr-icons { display: flex; gap: 16px; margin-left: auto; }
.cube { margin: 0 12px 0 271px; }
.addressbar .bar { margin-right: 0; }

/* page */
.page { height: 1062px; display: flex; background: #fff; border-radius: 8px; overflow: hidden; }
.doc { width: 1845px; }
.top { height: 65px; border-bottom: 1px solid #dadce0; padding: 0 24px 0 20px; display: flex; align-items: center; font-family: Inter, Roboto, sans-serif; }
h1 { margin: 0 auto 0 8px; padding-bottom: 3px; font-size: 21px; letter-spacing: -.55px; color: #5f6368; white-space: nowrap; }
.copy { width: 115px; height: 36px; border: 1px solid #dadce0; border-radius: 4px; display: flex; align-items: center; padding-left: 12px; gap: 7px; }
.copy, .docs { font-size: 14px; font-weight: 500; letter-spacing: -.1px; color: #1a6cf5; white-space: nowrap; }
.copy span, .docs { padding-bottom: 1px; }
.docs { width: 33px; margin-left: 15px; }
.views { height: 48px; display: flex; padding-left: 826px; font: 500 14px/20px Inter, Roboto, sans-serif; }
.view { display: flex; align-items: center; height: 48px; }
.view span { padding-bottom: 1px; }
.on { width: 73px; gap: 13px; padding: 0 0 1px 2px; color: #1a73e8; white-space: nowrap; background: linear-gradient(#1a73e8, #1a73e8) 0 100% / 100% 3px no-repeat; }
.desk { margin-left: 35px; gap: 9px; color: #5f6368; }
.report { width: 960px; height: 949px; margin-left: 443px; border: solid #dadce0; border-width: 0 1px; padding: 30px 9px 0 8px; }
.gauge { margin: 0 auto; }
.score { font: 33px Roboto, sans-serif; fill: #c33300; }
h2 { margin-top: 14px; font-size: 18px; line-height: 24px; text-align: center; color: #212121; }
.intro { margin: 8px 0 48px; font-size: 12px; line-height: 20px; text-align: center; color: #616161; }
.intro a { color: #06f; }
section { margin-bottom: 48px; }
h3 { font-size: 12px; line-height: 36px; letter-spacing: .8px; text-indent: -.4px; text-transform: uppercase; color: #616161; }
.audit { height: 42px; border-top: 1px solid #ebebeb; display: flex; align-items: center; font-size: 14px; color: #212121; padding: 0 7px 0 14px; white-space: nowrap; }
.audit i { width: 12px; height: 12px; margin: 1px 13.5px 0 0; background: #f33; clip-path: polygon(50% 0, 100% 100%, 0 100%); }
.audit svg { margin-left: auto; color: #757575; }
code { font: 11.9px "Liberation Mono", monospace; color: #1a2fb0; }
section p { border-top: 1px solid #ebebeb; padding-top: 8px; font-size: 12px; line-height: 20px; text-indent: -.4px; color: #757575; white-space: nowrap; }

.scroll { width: 15px; background: #f0f0f0; display: flex; flex-direction: column; align-items: center; padding: 4px 0 4px; }
.thumb { width: 15px; height: 187px; background: #cdcdcd; margin-top: 387px; }
.down { margin-top: auto; }

/* taskbar */
.taskbar { height: 48px; border-top: 1px solid #3d3d3f; background: #1c1c1c; display: flex; justify-content: space-between; }
.apps { display: flex; padding-left: 11px; }
.app { position: relative; width: 44px; display: flex; justify-content: center; padding-top: 11px; }
.focus { width: 40px; height: 40px; margin: 3px 2px 0; padding-top: 8px; border: 1px solid #333; border-radius: 4px; background: #2a2a2a; }
.app b { position: absolute; left: 19px; bottom: 4px; width: 6px; height: 3px; border-radius: 2px; background: #9a9a9a; }
.focus b { left: 7px; bottom: 0; width: 24px; background: #ff99a4; }
.tray { display: flex; align-items: center; padding-right: 20px; }
.wifi { margin: 0 8px 0 18px; }
.batt { margin-left: 8px; }
.clock { width: 79px; display: flex; flex-direction: column; align-items: flex-end; font: 12px/16px "Open Sans", "Noto Sans", sans-serif; letter-spacing: -.2px; color: #fff; }
.badge { width: 16px; height: 16px; margin: -1px 0 0 7px; border-radius: 8px; background: #4cc2ff; color: #111; text-align: center; font: 11px/16px "Open Sans", sans-serif; }

/* snapshot hint laid over the browser chrome */
.tip { position: absolute; left: 1626px; top: 21px; width: 259px; height: 85px; border: 1px solid #3a4147; border-radius: 4px; background: #191b1f; color: #fff; font: 12px/16px "Open Sans", "Noto Sans", sans-serif; letter-spacing: -.34px; padding: 14px 0 0 16px; box-shadow: 0 2px 6px rgba(0,0,0,.3); }
.tip-arrow { position: absolute; left: -10px; top: 33px; }
.tip-row { display: flex; align-items: center; white-space: nowrap; }
.l1 { width: 209px; }
.tip-row > svg { margin-bottom: 3px; }
.two { align-items: flex-end; margin-top: 5px; }
.l2 { width: 126px; padding-bottom: 1px; }
.two > svg { margin: 0 12px 0 0; }
```
